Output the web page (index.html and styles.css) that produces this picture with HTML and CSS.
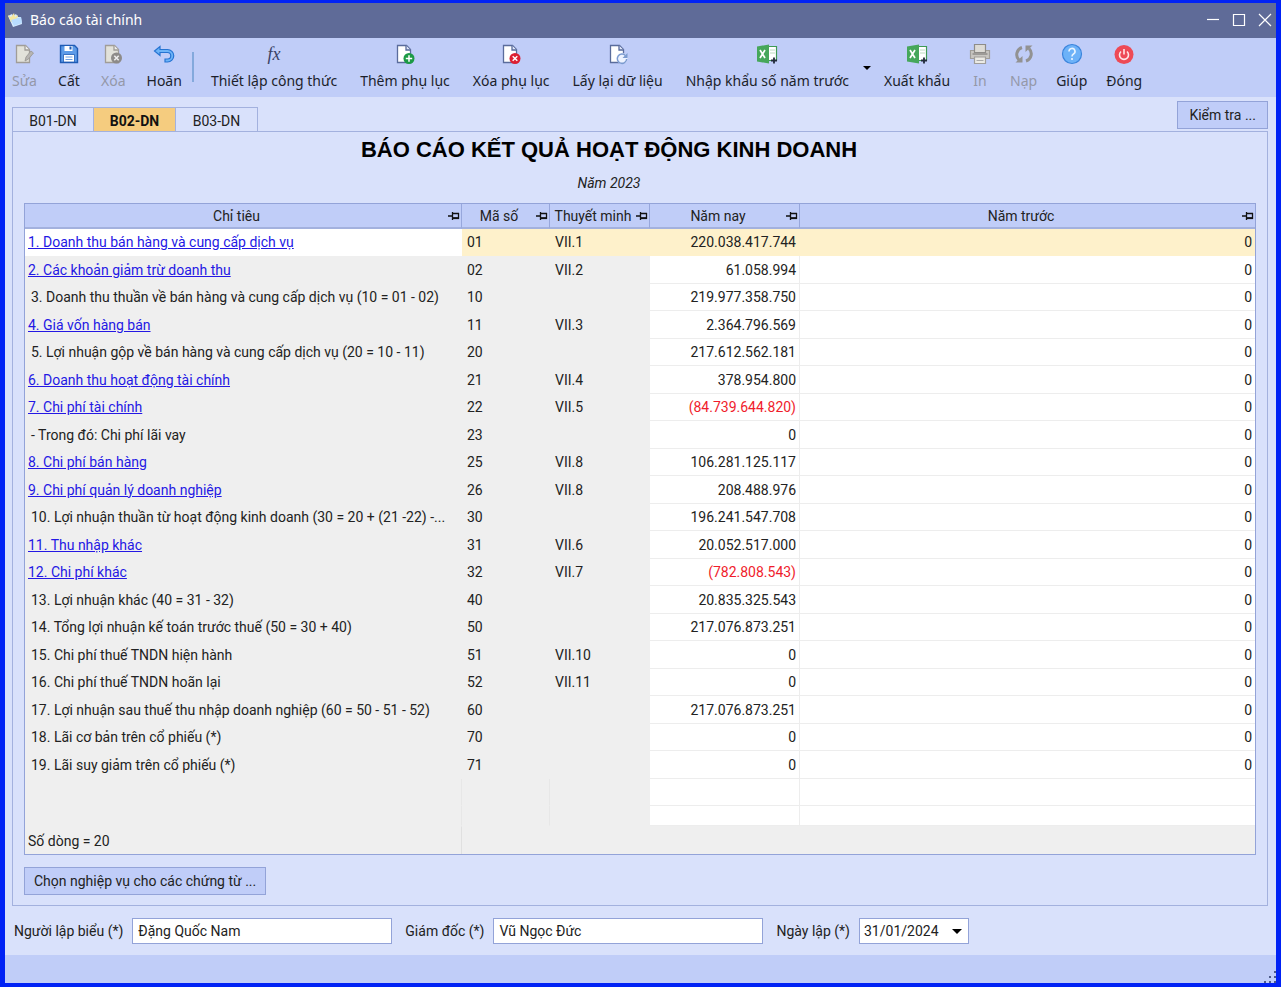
FILE: index.html
```html
<!DOCTYPE html>
<html lang="vi">

<head>
    <meta charset="UTF-8">
    <meta name="viewport" content="width=device-width, initial-scale=1.0">
    <title>Báo cáo tài chính</title>
    <link rel="stylesheet" href="styles.css">
</head>

<body>

    <!-- shared icon shapes -->
    <svg class="defs" aria-hidden="true">
        <symbol id="pin" viewBox="0 0 12 10">
            <path d="M0 5h4M4.500 1v8M5 2.500h6M5 7h6M10.500 2v6" fill="none" stroke="#111" stroke-width="1.300" />
            <path d="M5 7.300h6" stroke="#111" stroke-width="1.600" />
        </symbol>
        <symbol id="page" viewBox="0 0 22 22">
            <path d="M3.500 2.500h9l4 4v13h-13z" fill="#fff" stroke="#5a6c9c" stroke-width="1.300" />
            <path d="M12 2.500v4.500h4.500" fill="#dfe6fa" stroke="#5a6c9c" stroke-width="1.300" />
        </symbol>
        <symbol id="page-gray" viewBox="0 0 22 22">
            <path d="M3.500 2.500h9l4 4v13h-13z" fill="#e2e2da" stroke="#a09d98" stroke-width="1.300" />
            <path d="M12 2.500v4.500h4.500" fill="#eee" stroke="#a09d98" stroke-width="1.300" />
        </symbol>
        <symbol id="excel" viewBox="0 0 22 22">
            <path d="M12 3.500h8.500v14H12z" fill="#fff" stroke="#3f9a55" stroke-width="1.200" />
            <path d="M14 7h5M14 10h5" stroke="#bcdcc0" />
            <path d="M1 3.500L13 1.500v19L1 18.500z" fill="#46a75b" />
            <path d="M4 7l5 8M9 7l-5 8" stroke="#fff" stroke-width="1.700" />
            <path d="M15 17.500h6M18 14.500v6" stroke="#222b3a" stroke-width="1.800" />
        </symbol>
    </svg>

    <div class="window">
        <header class="titlebar">
            <svg class="app-icon" viewBox="0 0 16 16">
                <path d="M1 4l4-2 1 2 3-2 2 3 3 0 1 7-9 3z" fill="#d8ecff" />
                <path d="M1 3l3 2 3-4 1 4 3-2-1 5-6 2z" fill="#f4e7a0" />
                <path d="M4 8l10-3 1 6-8 3z" fill="#b8dcff" />
            </svg>
            <span class="caption">Báo cáo tài chính</span>
            <div class="window-buttons">
                <button type="button" aria-label="Thu nhỏ"><svg viewBox="0 0 14 14"><path d="M1 6.500h12" /></svg></button>
                <button type="button" aria-label="Phóng to"><svg viewBox="0 0 14 14"><path d="M1.500 1.500h11v11h-11z" /></svg></button>
                <button type="button" aria-label="Đóng cửa sổ"><svg viewBox="0 0 14 14"><path d="M1 1l12 12M13 1L1 13" /></svg></button>
            </div>
        </header>

        <nav class="toolbar">
            <button type="button" class="tool" disabled>
                <svg viewBox="0 0 22 22"><use href="#page-gray" /><path d="M12 18l1-4 5-6 2.500 2-5 6z" fill="#b7b5b2" stroke="#96948f" stroke-width=".8" /></svg>
                Sửa
            </button>
            <button type="button" class="tool">
                <svg viewBox="0 0 22 22">
                    <path d="M2.500 2.500h14l3 3v14h-17z" fill="#5d9be8" stroke="#1f5cb5" stroke-width="1.400" />
                    <path d="M6.500 3h8v5h-8z" fill="#fff" /><path d="M11.500 3.500h2v3h-2z" fill="#1f5cb5" />
                    <path d="M5.500 11.500h11v7.500h-11z" fill="#fff" stroke="#1f5cb5" stroke-width=".8" /><path d="M7.500 14h7M7.500 16.500h7" stroke="#6c9fe4" />
                </svg>
                Cất
            </button>
            <button type="button" class="tool" disabled>
                <svg viewBox="0 0 22 22"><use href="#page-gray" /><circle cx="14.500" cy="15" r="5.500" fill="#8d8b89" /><path d="M12.300 12.800l4.400 4.400M16.700 12.800l-4.400 4.400" stroke="#eee" stroke-width="1.600" /></svg>
                Xóa
            </button>
            <button type="button" class="tool">
                <svg viewBox="0 0 22 22">
                    <path d="M1.500 8L7 3.500V6.500h7.500a6 6 0 0 1 0 12.500H12v-3h2.500a3 3 0 0 0 0-6.500H7v3z" fill="#6db4f8" stroke="#2674d2" stroke-width="1.200" />
                </svg>
                Hoãn
            </button>
            <span class="separator"></span>
            <button type="button" class="tool wide">
                <span class="fx">fx</span>
                Thiết lập công thức
            </button>
            <button type="button" class="tool wide">
                <svg viewBox="0 0 22 22"><use href="#page" /><circle cx="15" cy="15.500" r="5.500" fill="#1c9a45" /><path d="M11.800 15.500h6.400M15 12.300v6.400" stroke="#fff" stroke-width="1.500" /></svg>
                Thêm phụ lục
            </button>
            <button type="button" class="tool wide">
                <svg viewBox="0 0 22 22"><use href="#page" /><circle cx="15" cy="15.500" r="5.500" fill="#dc1f32" /><path d="M12.700 13.200l4.600 4.600M17.300 13.200l-4.600 4.600" stroke="#fff" stroke-width="1.500" /></svg>
                Xóa phụ lục
            </button>
            <button type="button" class="tool wide">
                <svg viewBox="0 0 22 22"><use href="#page" /><circle cx="15" cy="15.500" r="5.500" fill="#eef3ff" /><path d="M18.500 12.500a4.700 4.700 0 1 0 1.200 3.500" fill="none" stroke="#7c9bd0" stroke-width="1.500" /><path d="M15.500 15h5v-5z" fill="#7c9bd0" /></svg>
                Lấy lại dữ liệu
            </button>
            <button type="button" class="tool wide">
                <svg viewBox="0 0 22 22"><use href="#excel" /></svg>
                Nhập khẩu số năm trước
            </button>
            <button type="button" class="drop" aria-label="Tùy chọn nhập khẩu"><svg viewBox="0 0 8 4"><path d="M0 0h8L4 4z" /></svg></button>
            <button type="button" class="tool">
                <svg viewBox="0 0 22 22"><use href="#excel" /></svg>
                Xuất khẩu
            </button>
            <button type="button" class="tool narrow" disabled>
                <svg viewBox="0 0 22 22">
                    <path d="M1.500 7.500h19v8h-19z" fill="#c9c7c2" stroke="#a09e9a" stroke-width="1.200" />
                    <path d="M5.500 1.500h11v8h-11z" fill="#dddbd5" stroke="#8e8c88" stroke-width="1.200" />
                    <path d="M3.500 11h15" stroke="#8e8c88" stroke-width="1.500" />
                    <path d="M5.500 14h11v6.500h-11z" fill="#ecebe5" stroke="#a09e9a" stroke-width="1.200" />
                    <path d="M7.500 17.500h7" stroke="#aaa" />
                </svg>
                In
            </button>
            <button type="button" class="tool narrow" disabled>
                <svg viewBox="0 0 22 22">
                    <path d="M9 4.500a7.500 7.500 0 0 0-3 12.500M13 18a7.500 7.500 0 0 0 3-12.500" fill="none" stroke="#929292" stroke-width="3" />
                    <path d="M2.500 19.500h7v-6.500zM19.500 2.500h-7V9z" fill="#929292" />
                </svg>
                Nạp
            </button>
            <button type="button" class="tool narrow">
                <svg viewBox="0 0 22 22">
                    <circle cx="11" cy="11" r="9.500" fill="#6db2f8" stroke="#3a84dc" stroke-width="1.200" />
                    <path d="M8 8.500a3 3 0 1 1 4.500 2.500q-1.500 1-1.500 2.500M11 15v2" fill="none" stroke="#e8f4ff" stroke-width="1.600" />
                </svg>
                Giúp
            </button>
            <button type="button" class="tool narrow">
                <svg viewBox="0 0 22 22">
                    <circle cx="11" cy="11.500" r="9.500" fill="#ee4a55" />
                    <path d="M8 8.500a4.500 4.500 0 1 0 6 0M11 6v5.500" fill="none" stroke="#ffe6e6" stroke-width="1.600" />
                </svg>
                Đóng
            </button>
        </nav>

        <main class="content">
            <div class="tab-row">
                <div class="tabs" role="tablist">
                    <button type="button" role="tab" class="tab">B01-DN</button>
                    <button type="button" role="tab" class="tab active" aria-selected="true">B02-DN</button>
                    <button type="button" role="tab" class="tab">B03-DN</button>
                </div>
                <button type="button" class="btn check">Kiểm tra ...</button>
            </div>

            <section class="panel">
                <div class="heading">
                    <h1>BÁO CÁO KẾT QUẢ HOẠT ĐỘNG KINH DOANH</h1>
                    <p>Năm 2023</p>
                </div>

                <table class="report">
                    <colgroup>
                        <col class="col-name">
                        <col class="col-code">
                        <col class="col-note">
                        <col class="col-now">
                        <col>
                    </colgroup>
                    <thead>
                        <tr>
                            <th><div><span>Chỉ tiêu</span><svg class="pin"><use href="#pin" /></svg></div></th>
                            <th><div><span>Mã số</span><svg class="pin"><use href="#pin" /></svg></div></th>
                            <th><div><span>Thuyết minh</span><svg class="pin"><use href="#pin" /></svg></div></th>
                            <th><div><span>Năm nay</span><svg class="pin"><use href="#pin" /></svg></div></th>
                            <th><div><span>Năm trước</span><svg class="pin"><use href="#pin" /></svg></div></th>
                        </tr>
                    </thead>
                    <tbody>
                        <tr class="selected"><td><a href="#">1. Doanh thu bán hàng và cung cấp dịch vụ</a></td><td>01</td><td>VII.1</td><td>220.038.417.744</td><td>0</td></tr>
                        <tr><td><a href="#">2. Các khoản giảm trừ doanh thu</a></td><td>02</td><td>VII.2</td><td>61.058.994</td><td>0</td></tr>
                        <tr><td class="plain">3. Doanh thu thuần về bán hàng và cung cấp dịch vụ (10 = 01 - 02)</td><td>10</td><td></td><td>219.977.358.750</td><td>0</td></tr>
                        <tr><td><a href="#">4. Giá vốn hàng bán</a></td><td>11</td><td>VII.3</td><td>2.364.796.569</td><td>0</td></tr>
                        <tr><td class="plain">5. Lợi nhuận gộp về bán hàng và cung cấp dịch vụ (20 = 10 - 11)</td><td>20</td><td></td><td>217.612.562.181</td><td>0</td></tr>
                        <tr><td><a href="#">6. Doanh thu hoạt động tài chính</a></td><td>21</td><td>VII.4</td><td>378.954.800</td><td>0</td></tr>
                        <tr><td><a href="#">7. Chi phí tài chính</a></td><td>22</td><td>VII.5</td><td class="negative">(84.739.644.820)</td><td>0</td></tr>
                        <tr><td class="plain">- Trong đó: Chi phí lãi vay</td><td>23</td><td></td><td>0</td><td>0</td></tr>
                        <tr><td><a href="#">8. Chi phí bán hàng</a></td><td>25</td><td>VII.8</td><td>106.281.125.117</td><td>0</td></tr>
                        <tr><td><a href="#">9. Chi phí quản lý doanh nghiệp</a></td><td>26</td><td>VII.8</td><td>208.488.976</td><td>0</td></tr>
                        <tr><td class="plain">10. Lợi nhuận thuần từ hoạt động kinh doanh (30 = 20 + (21 -22) -...</td><td>30</td><td></td><td>196.241.547.708</td><td>0</td></tr>
                        <tr><td><a href="#">11. Thu nhập khác</a></td><td>31</td><td>VII.6</td><td>20.052.517.000</td><td>0</td></tr>
                        <tr><td><a href="#">12. Chi phí khác</a></td><td>32</td><td>VII.7</td><td class="negative">(782.808.543)</td><td>0</td></tr>
                        <tr><td class="plain">13. Lợi nhuận khác (40 = 31 - 32)</td><td>40</td><td></td><td>20.835.325.543</td><td>0</td></tr>
                        <tr><td class="plain">14. Tổng lợi nhuận kế toán trước thuế (50 = 30 + 40)</td><td>50</td><td></td><td>217.076.873.251</td><td>0</td></tr>
                        <tr><td class="plain">15. Chi phí thuế TNDN hiện hành</td><td>51</td><td>VII.10</td><td>0</td><td>0</td></tr>
                        <tr><td class="plain">16. Chi phí thuế TNDN hoãn lại</td><td>52</td><td>VII.11</td><td>0</td><td>0</td></tr>
                        <tr><td class="plain">17. Lợi nhuận sau thuế thu nhập doanh nghiệp (60 = 50 - 51 - 52)</td><td>60</td><td></td><td>217.076.873.251</td><td>0</td></tr>
                        <tr><td class="plain">18. Lãi cơ bản trên cổ phiếu (*)</td><td>70</td><td></td><td>0</td><td>0</td></tr>
                        <tr><td class="plain">19. Lãi suy giảm trên cổ phiếu (*)</td><td>71</td><td></td><td>0</td><td>0</td></tr>
                        <tr class="blank"><td></td><td></td><td></td><td></td><td></td></tr>
                        <tr class="blank short"><td></td><td></td><td></td><td></td><td></td></tr>
                    </tbody>
                    <tfoot>
                        <tr><td>Số dòng = 20</td><td colspan="4"></td></tr>
                    </tfoot>
                </table>

                <button type="button" class="btn">Chọn nghiệp vụ cho các chứng từ ...</button>
            </section>

            <form class="signers">
                <label for="preparer">Người lập biểu (*)</label>
                <input type="text" id="preparer" class="preparer" value="Đặng Quốc Nam">
                <label for="director">Giám đốc (*)</label>
                <input type="text" id="director" class="director" value="Vũ Ngọc Đức">
                <label for="report-date">Ngày lập (*)</label>
                <div class="date-box">
                    <select id="report-date">
                        <option>31/01/2024</option>
                    </select>
                    <svg viewBox="0 0 10 5"><path d="M0 0h10L5 5z" /></svg>
                </div>
            </form>
        </main>

        <footer class="statusbar">
            <svg class="grip" viewBox="0 0 12 12">
                <path d="M10 0h2v2h-2zM5 5h2v2H5zM10 5h2v2h-2zM0 10h2v2H0zM5 10h2v2H5zM10 10h2v2h-2z" />
            </svg>
        </footer>
    </div>

</body>

</html>
```
FILE: styles.css
```css
* {
    box-sizing: border-box;
}

body {
    margin: 0;
    background-color: #0022f5;
    color: #222;
    font-family: Roboto, "Liberation Sans", sans-serif;
    font-size: 14px;
    line-height: 18px;
}

button,
input,
select {
    font: inherit;
    color: inherit;
}

.defs {
    position: absolute;
    width: 0;
    height: 0;
}

.window {
    display: flex;
    flex-direction: column;
    min-height: 100vh;
    border: 5px solid #0022f5;
    border-top-width: 3px;
    border-bottom-width: 4px;
    background-color: #d9e1fb;
}

/* title bar */
.titlebar {
    display: flex;
    align-items: center;
    height: 35px;
    padding: 0 4px 2px 2px;
    background-color: #5f6b98;
    color: #fff;
    font-family: "Noto Sans", sans-serif;
}

.app-icon {
    width: 16px;
    height: 16px;
    margin-right: 7px;
}

.window-buttons {
    display: flex;
    gap: 12px;
    margin-left: auto;
}

.window-buttons button {
    display: flex;
    padding: 0;
    border: 0;
    background: none;
}

.window-buttons svg {
    width: 14px;
    height: 14px;
    fill: none;
    stroke: #fff;
    stroke-width: 1.2;
}

/* toolbar */
.toolbar {
    display: flex;
    gap: 21px;
    height: 59px;
    padding-left: 7px;
    background-color: #c0cdf8;
    font-family: "Noto Sans", sans-serif;
}

.tool {
    display: flex;
    flex-direction: column;
    align-items: center;
    gap: 7px;
    padding: 5px 0 0;
    border: 0;
    background: none;
    white-space: nowrap;
    color: #1c1f2b;
}

.tool.wide {
    padding: 5px 1px 0;
}

.tool.narrow {
    margin-left: -2px;
}

.tool svg {
    width: 22px;
    height: 22px;
}

.tool:disabled {
    color: #9498a8;
}

.fx {
    height: 22px;
    line-height: 22px;
    font-family: "Liberation Serif", serif;
    font-size: 18px;
    font-style: italic;
    color: #3a4266;
}

.separator {
    width: 2px;
    height: 30px;
    margin: 14px -5px 0 -11px;
    background-color: #84a9dc;
}

.drop {
    margin: 0 -8px;
    padding: 0;
    border: 0;
    background: none;
}

.drop svg {
    display: block;
    width: 8px;
    height: 4px;
}

/* tabs and panel */
.content {
    flex: 1;
    padding: 4px 8px 11px 7px;
}

.tab-row {
    display: flex;
    justify-content: space-between;
    align-items: flex-start;
    height: 30px;
}

.tabs {
    display: flex;
    margin-top: 6px;
}

.tab {
    width: 82px;
    height: 24px;
    padding: 2px 0 0;
    border: 1px solid #a3b1de;
    border-left-width: 0;
    border-bottom: 0;
    background-color: #d9e1fb;
}

.tab:first-child {
    border-left-width: 1px;
}

.tab.active {
    background-color: #f5cc7f;
    font-weight: bold;
    color: #111;
}

.btn {
    height: 28px;
    padding: 0 9px;
    border: 1px solid #93a3d8;
    background-color: #c0cdf8;
}

.btn.check {
    padding: 0 11px;
}

.panel {
    padding: 0 11px 10px;
    border: 1px solid #a3b1de;
}

.heading {
    padding-right: 62px;
    text-align: center;
}

.heading h1 {
    margin: 0;
    padding-top: 4px;
    font-family: "Liberation Sans", sans-serif;
    font-size: 22px;
    line-height: 28px;
    color: #000;
}

.heading p {
    margin: 0;
    padding: 10px 0 11px;
    font-style: italic;
}

/* report table */
.report {
    width: 100%;
    margin-bottom: 12px;
    border: 1px solid #93a3d8;
    border-spacing: 0;
    table-layout: fixed;
    background-color: #fff;
}

.col-name {
    width: 437px;
}

.col-code {
    width: 88px;
}

.col-note {
    width: 100px;
}

.col-now {
    width: 150px;
}

.report th {
    height: 25px;
    padding: 0 1px 0 0;
    border-right: 1px solid #97a7dc;
    border-bottom: 2px solid #a3b1de;
    background-color: #c0cdf8;
    font-weight: normal;
}

.report th:last-child {
    border-right: 0;
}

.report th div {
    display: flex;
    align-items: center;
}

.report th span {
    flex: 1;
}

.pin {
    width: 12px;
    height: 10px;
}

.report td {
    height: 27px;
    padding: 0 3px;
    border-right: 1px solid #ededed;
    border-bottom: 1px solid #ededed;
    white-space: nowrap;
    overflow: hidden;
}

.report tbody tr:nth-child(even) td {
    height: 28px;
}

.report td:nth-child(-n+3) {
    border-color: #efefef;
    background-color: #efefef;
}

.report td:nth-child(2),
.report td:nth-child(3) {
    padding-left: 5px;
}

.report td:nth-child(n+4) {
    text-align: right;
}

.report td:nth-child(5) {
    border-right: 0;
}

.report td.plain {
    padding-left: 6px;
}

.report .selected td {
    border-color: #fef1cb;
    background-color: #fef1cb;
}

.report .selected td:first-child {
    border-color: #fff;
    background-color: #fff;
}

.report .blank td:nth-child(-n+2) {
    border-right-color: #e7e7e7;
}

.report tbody tr.short:last-child td {
    height: 20px;
}

.report a {
    color: #2418e4;
}

.report .negative {
    color: #f01c2c;
}

.report tfoot td {
    height: 28px;
    border-bottom: 0;
}

.report tfoot tr td {
    border-top: 1px solid #e0e0e0;
}

.report tfoot td:first-child {
    border-right-color: #e0e0e0;
}

/* signers */
.signers {
    display: flex;
    align-items: center;
    padding: 12px 0 0 2px;
}

.signers label {
    margin-right: 9px;
}

.signers input,
.date-box {
    height: 26px;
    margin-right: 13px;
    padding: 0 5px;
    border: 1px solid #93a3d8;
    background-color: #fff;
}

.preparer {
    width: 260px;
}

.director {
    width: 270px;
}

.date-box {
    display: flex;
    align-items: center;
    width: 110px;
    padding: 0 6px 0 4px;
}

.date-box select {
    flex: 1;
    min-width: 0;
    padding: 0;
    border: 0;
    background: none;
    appearance: none;
}

.date-box svg {
    width: 10px;
    height: 5px;
    pointer-events: none;
}

/* status bar */
.statusbar {
    display: flex;
    justify-content: flex-end;
    align-items: flex-end;
    height: 28px;
    background-color: #c0cdf8;
}

.grip {
    width: 12px;
    height: 12px;
    fill: #4c5a88;
}
```
